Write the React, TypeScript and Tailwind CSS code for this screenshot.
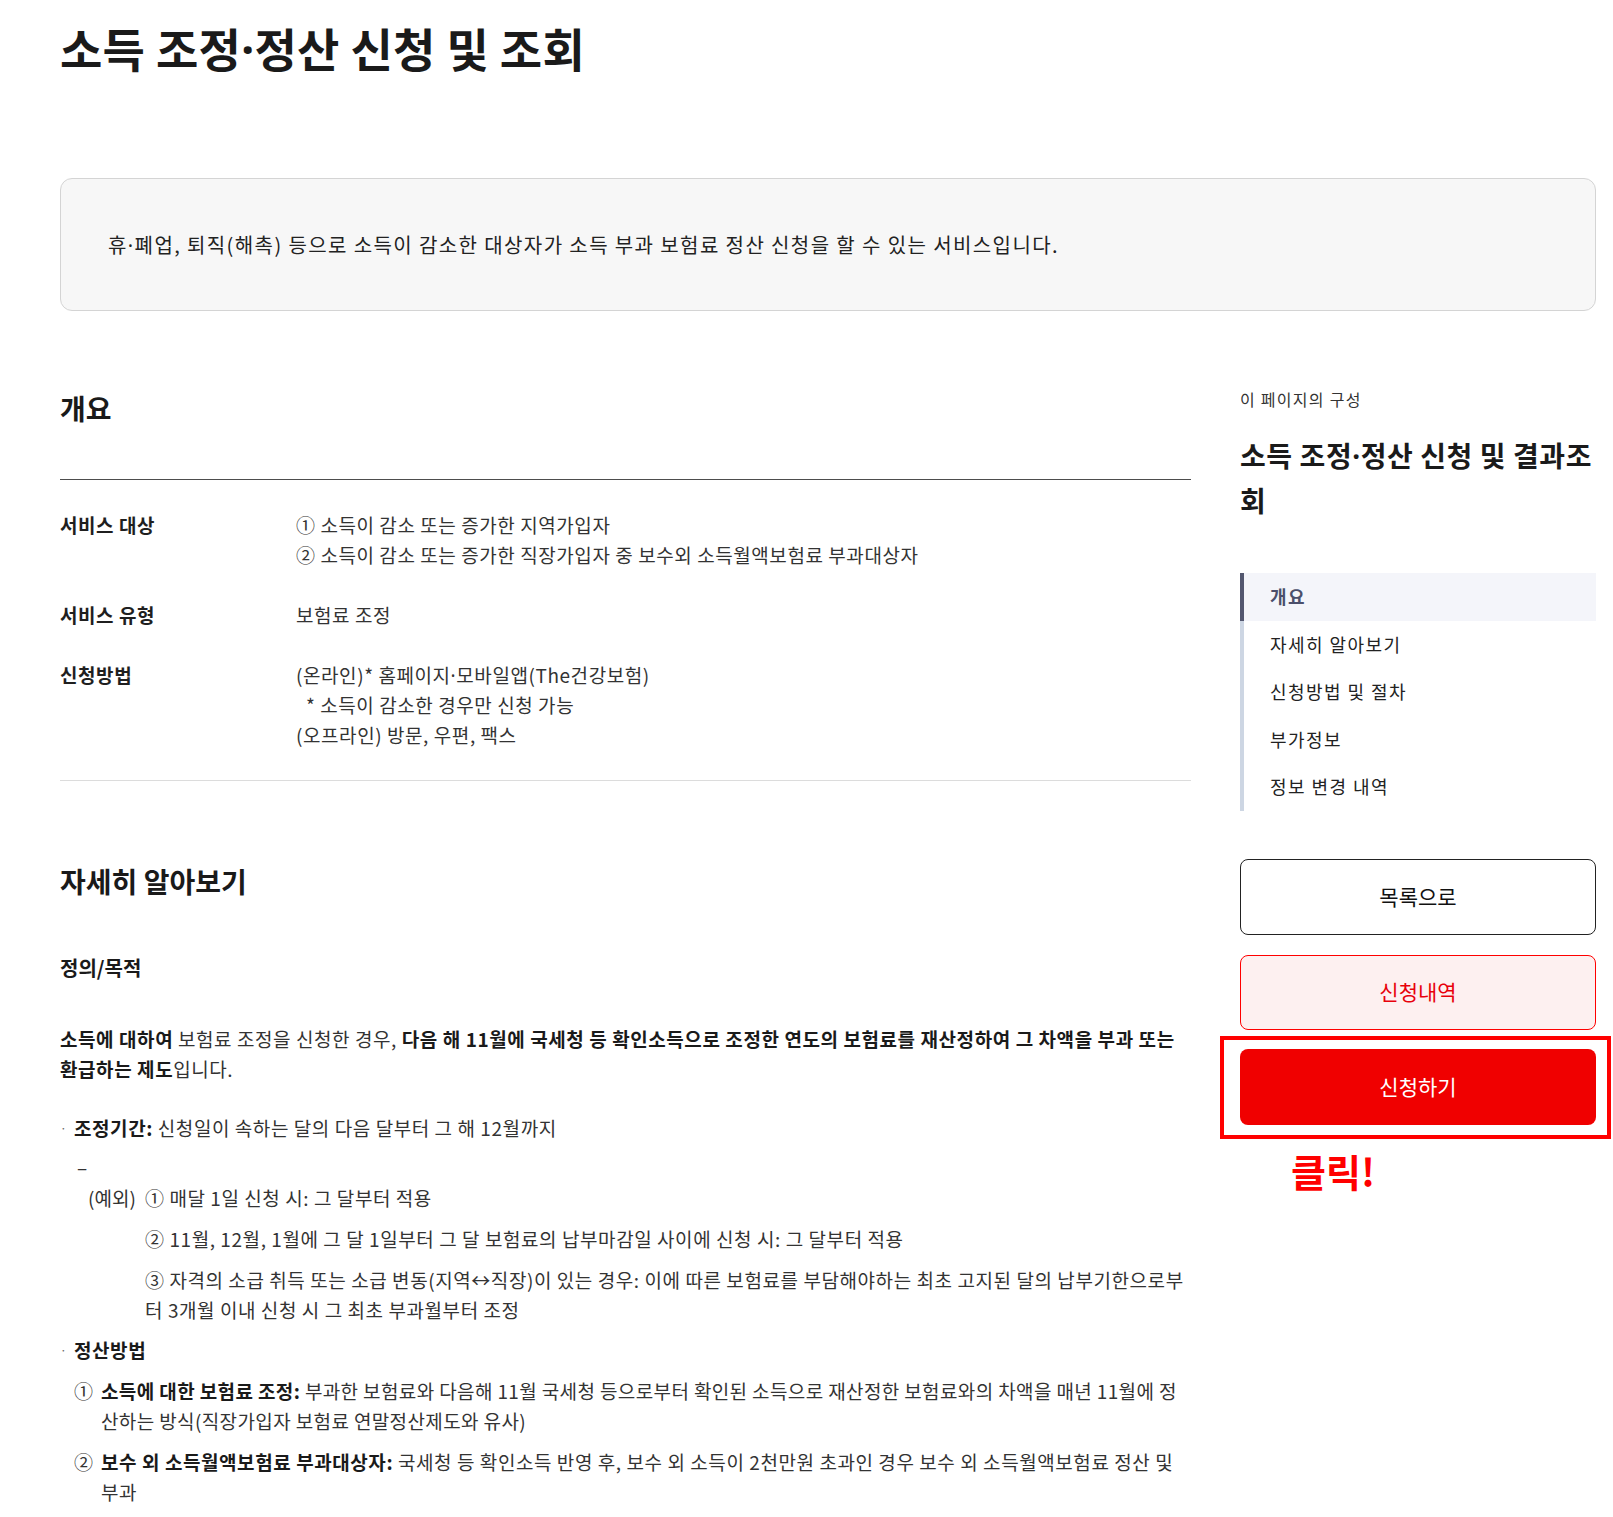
import React from "react";

const navItems = ["개요", "자세히 알아보기", "신청방법 및 절차", "부가정보", "정보 변경 내역"];

// narrow middle dot (the CJK font draws U+00B7 full width)
function MidDot() {
  return <span className="font-['Noto_Sans',sans-serif] leading-none">·</span>;
}

function InfoRow({ label, children }: { label: string; children: React.ReactNode }) {
  return (
    <div className="flex">
      <div className="w-[236px] shrink-0 font-bold text-[#1f1f1f]">{label}</div>
      <div className="flex-1 text-[#333]">{children}</div>
    </div>
  );
}

function Dot() {
  return <span className="w-[14px] shrink-0 text-[#666] text-[12px]">·</span>;
}

export default function App() {
  return (
    <div className="min-h-screen bg-white font-['Noto_Sans_CJK_KR','Noto_Sans',sans-serif] text-[#222] pl-[60px] pr-[17px] pb-10">
      <h1 className="pt-[17px] h-[77px] text-[46px] leading-[60px] font-bold text-[#1a1a1a] tracking-[0.3px]">
        소득 조정<MidDot />정산 신청 및 조회
      </h1>

      <div className="mt-[101px] h-[133px] rounded-xl border border-[#d4d4d4] bg-[#f7f7f7] px-[47px] flex items-center">
        <p className="text-[20px] leading-[30px] tracking-[0.07em] text-[#222]">
          휴<MidDot />폐업, 퇴직(해촉) 등으로 소득이 감소한 대상자가 소득 부과 보험료 정산 신청을 할 수 있는 서비스입니다.
        </p>
      </div>

      <div className="mt-[77px] flex gap-[49px]">
        <main className="w-[1131px] shrink-0 text-[19px] leading-[30px] tracking-[0.03em]">
          <h2 className="text-[28px] leading-[40px] font-bold tracking-normal text-[#1a1a1a] pb-[51px] border-b border-[#4d4d4d]">
            개요
          </h2>
          <div className="py-[30px] flex flex-col gap-[30px] border-b border-[#dcdcdc]">
            <InfoRow label="서비스 대상">
              <p>① 소득이 감소 또는 증가한 지역가입자</p>
              <p>② 소득이 감소 또는 증가한 직장가입자 중 보수외 소득월액보험료 부과대상자</p>
            </InfoRow>
            <InfoRow label="서비스 유형">
              <p>보험료 조정</p>
            </InfoRow>
            <InfoRow label="신청방법">
              <p>
                (온라인)* 홈페이지<MidDot />모바일앱(The건강보험)
              </p>
              <p className="pl-[10px]">* 소득이 감소한 경우만 신청 가능</p>
              <p>(오프라인) 방문, 우편, 팩스</p>
            </InfoRow>
          </div>

          <h2 className="mt-[80px] text-[28px] leading-[40px] font-bold tracking-normal text-[#1a1a1a]">자세히 알아보기</h2>
          <h3 className="mt-[52px] text-[20px] leading-[30px] font-bold tracking-normal text-[#1a1a1a]">정의/목적</h3>

          <p className="mt-[41px] text-[#333]">
            <b className="text-[#1a1a1a]">소득에 대하여</b> 보험료 조정을 신청한 경우,{" "}
            <b className="text-[#1a1a1a]">
              다음 해 11월에 국세청 등 확인소득으로 조정한 연도의 보험료를 재산정하여 그 차액을 부과 또는 환급하는 제도
            </b>
            입니다.
          </p>

          <ul className="mt-[29px] text-[#333]">
            <li>
              <div className="flex">
                <Dot />
                <p>
                  <b className="text-[#1a1a1a]">조정기간:</b> 신청일이 속하는 달의 다음 달부터 그 해 12월까지
                </p>
              </div>
              <p className="mt-[9px] pl-[17px]">–</p>
              <div className="mt-px pl-[28px] flex">
                <span className="w-[57px] shrink-0 tracking-normal">(예외)</span>
                <div className="flex flex-col gap-[11px]">
                  <p>① 매달 1일 신청 시: 그 달부터 적용</p>
                  <p>② 11월, 12월, 1월에 그 달 1일부터 그 달 보험료의 납부마감일 사이에 신청 시: 그 달부터 적용</p>
                  <p>
                    ③ 자격의 소급 취득 또는 소급 변동(지역↔직장)이 있는 경우: 이에 따른 보험료를 부담해야하는 최초 고지된 달의
                    납부기한으로부터 3개월 이내 신청 시 그 최초 부과월부터 조정
                  </p>
                </div>
              </div>
            </li>
            <li className="mt-[10px]">
              <div className="flex">
                <Dot />
                <b className="text-[#1a1a1a]">정산방법</b>
              </div>
              <div className="mt-[11px] flex flex-col gap-[11px] pl-[14px]">
                <div className="flex">
                  <span className="w-[27px] shrink-0">①</span>
                  <p className="tracking-[0.02em]">
                    <b className="text-[#1a1a1a]">소득에 대한 보험료 조정:</b> 부과한 보험료와 다음해 11월 국세청 등으로부터
                    확인된 소득으로 재산정한 보험료와의 차액을 매년 11월에 정산하는 방식(직장가입자 보험료 연말정산제도와 유사)
                  </p>
                </div>
                <div className="flex">
                  <span className="w-[27px] shrink-0">②</span>
                  <p>
                    <b className="text-[#1a1a1a]">보수 외 소득월액보험료 부과대상자:</b> 국세청 등 확인소득 반영 후, 보수 외
                    소득이 2천만원 초과인 경우 보수 외 소득월액보험료 정산 및 부과
                  </p>
                </div>
              </div>
            </li>
          </ul>
        </main>

        <aside className="w-[356px] shrink-0">
          <p className="text-[16px] leading-[22px] tracking-[0.08em] text-[#333]">이 페이지의 구성</p>
          <h2 className="mt-[23px] text-[28px] leading-[45px] font-bold tracking-[0.02em] text-[#1a1a1a]">
            소득 조정<MidDot />정산 신청 및 결과조회
          </h2>
          <nav className="mt-[50px] flex flex-col">
            {navItems.map((item, i) => (
              <a
                key={item}
                className={
                  i === 0
                    ? "h-[47.5px] flex items-center pl-[26px] border-l-4 border-[#53576f] bg-[#f4f5fa] text-[18px] tracking-[0.08em] font-semibold text-[#4b4f6b]"
                    : "h-[47.5px] flex items-center pl-[26px] border-l-4 border-[#cdd6e3] text-[18px] tracking-[0.08em] text-[#222]"
                }
              >
                {item}
              </a>
            ))}
          </nav>

          <button className="mt-[48px] w-full h-[76px] rounded-lg border border-[#222] bg-white text-[21px] text-[#111]">
            목록으로
          </button>
          <button className="mt-[20px] w-full h-[75px] rounded-lg border border-[#f00] bg-[#fdf0f0] text-[21px] text-[#e8000b]">
            신청내역
          </button>
          <div className="relative mt-[19px]">
            <button className="w-full h-[76px] rounded-lg bg-[#f00000] text-[21px] text-white">신청하기</button>
            <div className="absolute -left-[20px] -right-[15px] -top-[13px] -bottom-[14px] border-4 border-[#ff0000]" />
          </div>
          <p className="mt-[24px] pl-[51px] text-[38px] leading-[44px] font-bold text-[#ff0000]">클릭!</p>
        </aside>
      </div>
    </div>
  );
}
